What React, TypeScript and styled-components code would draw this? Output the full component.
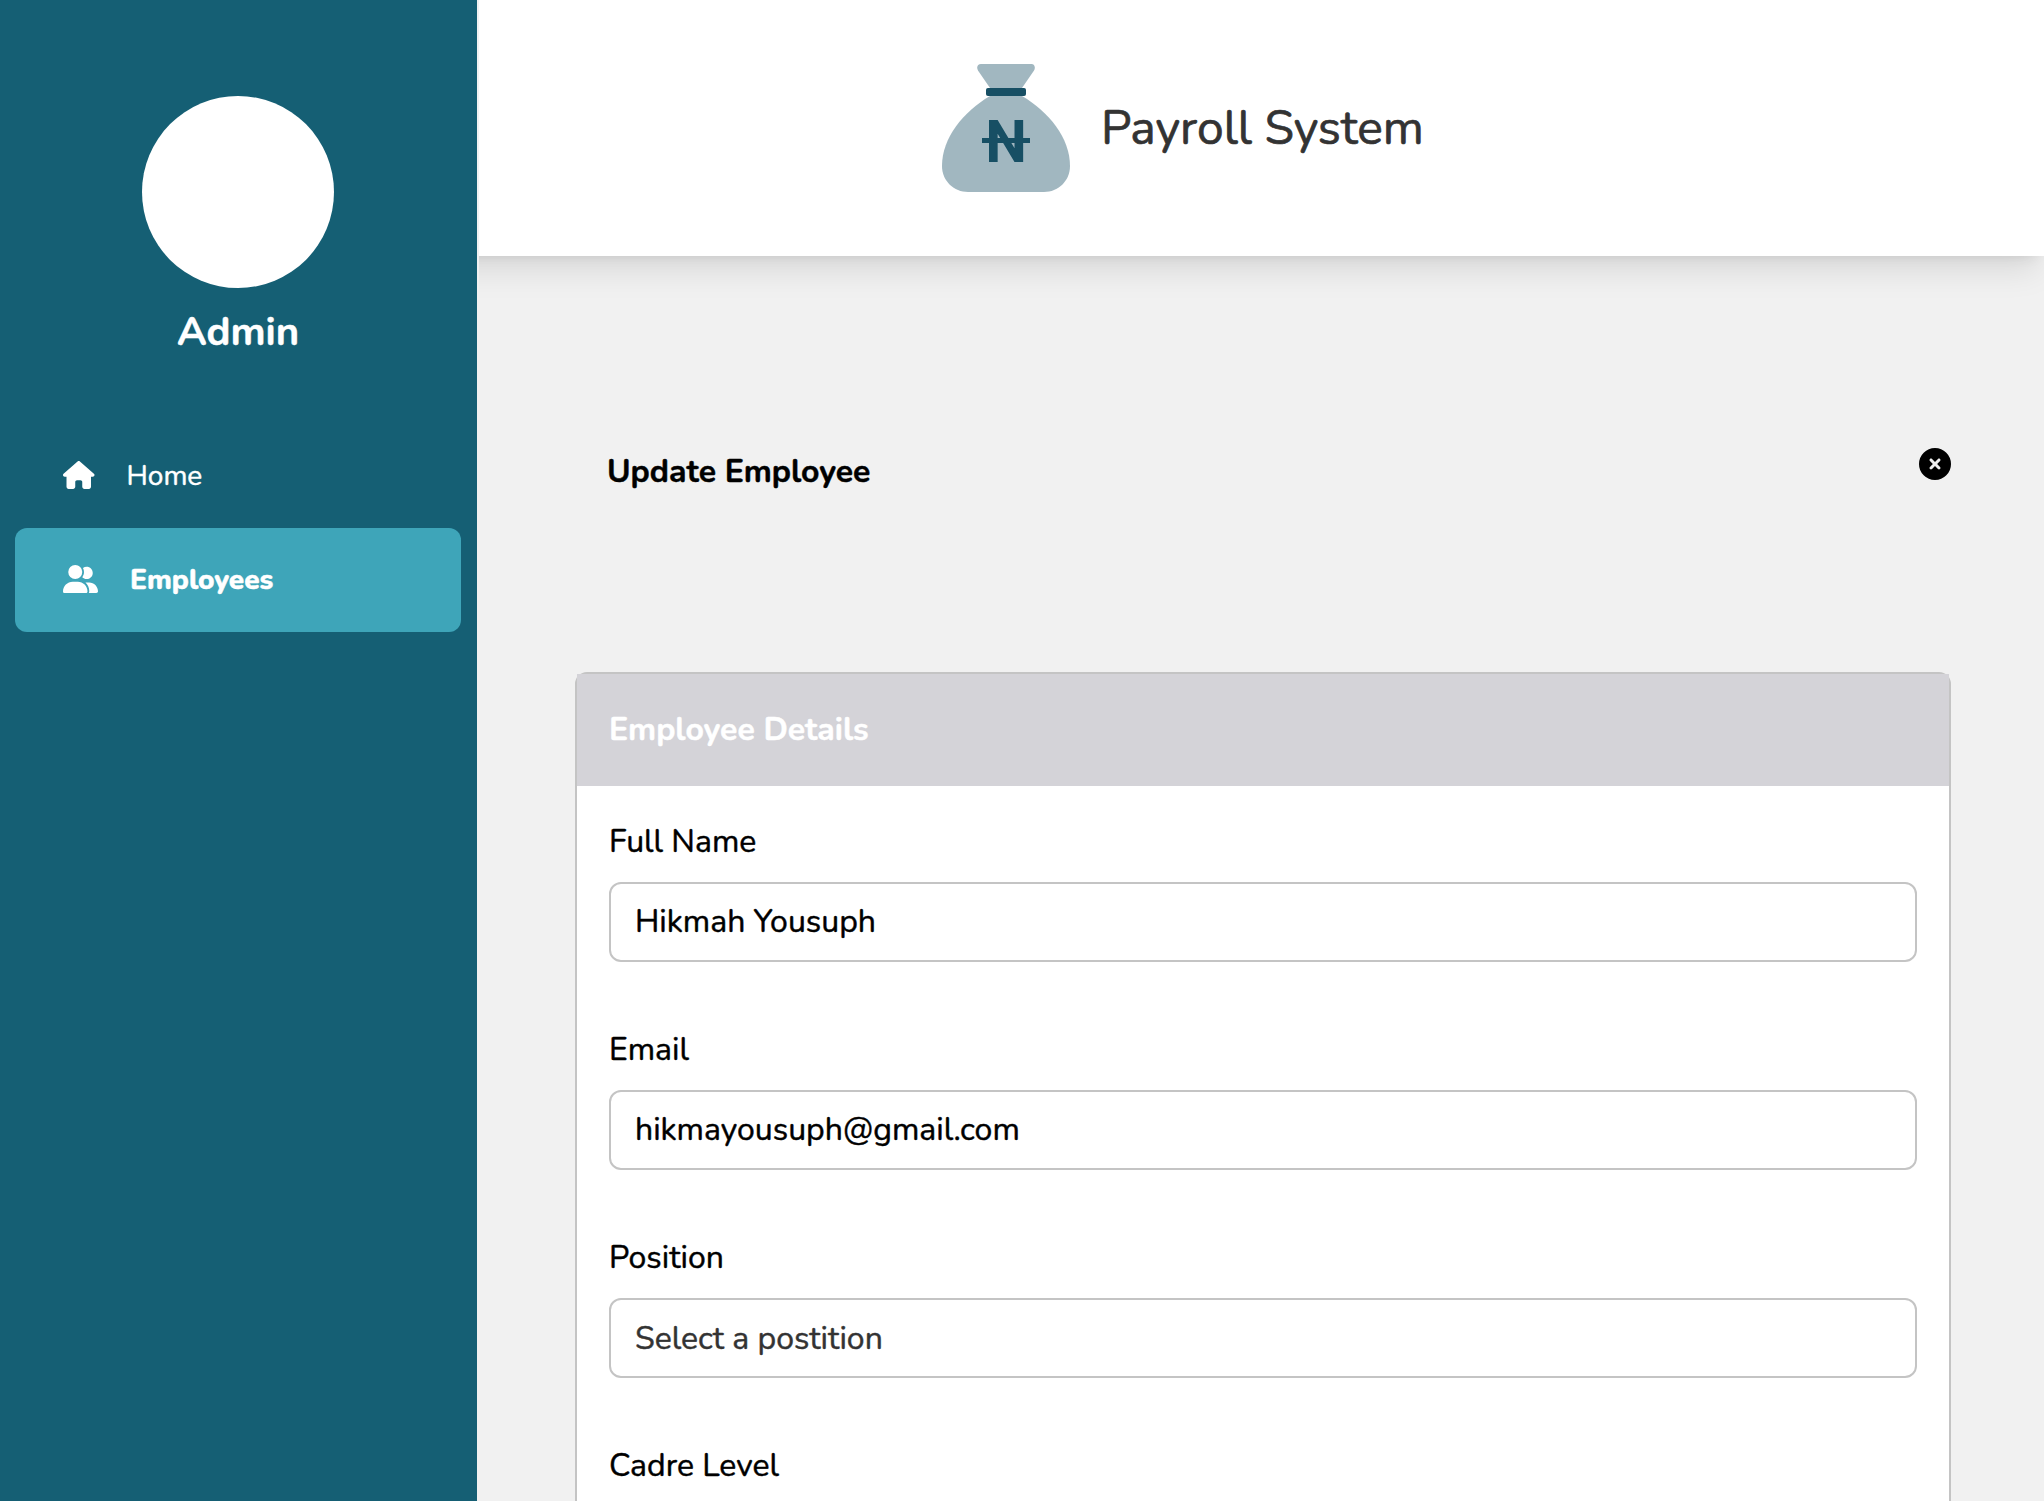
import React from "react";
import styled, { createGlobalStyle } from "styled-components";
import { FaCircleXmark, FaHouse, FaUserGroup } from "react-icons/fa6";

const GlobalStyle = createGlobalStyle`
  *, *::before, *::after { box-sizing: border-box; }
  body {
    margin: 0;
    background: #f1f1f1;
    color: #000;
    font-family: Nunito, Lato, "Open Sans", sans-serif;
    font-weight: 400;
    -webkit-text-stroke-width: 0.45px;
  }
  h1, h2, p { margin: 0; }
`;

const Page = styled.div`
  display: flex;
  gap: 2px;
  height: 100vh;
  overflow: hidden;
`;

const Sidebar = styled.aside`
  display: flex;
  flex-direction: column;
  align-items: center;
  flex: none;
  width: 477px;
  padding: 96px 16px 0 15px;
  background: #155f74;
  color: #fff;
`;

const Avatar = styled.div`
  width: 192px;
  height: 192px;
  border-radius: 50%;
  background: #fff;
`;

const UserName = styled.p`
  margin-top: 20px;
  font-size: 40px;
  line-height: 48px;
  font-weight: 700;
`;

const Nav = styled.nav`
  align-self: stretch;
  margin-top: 68px;
`;

const NavItem = styled.a<{ $active?: boolean; $iconWidth: number }>`
  display: flex;
  align-items: center;
  gap: 32px;
  height: 104px;
  padding: 0 48px;
  border-radius: 12px;
  background: ${(p) => (p.$active ? "#3ea5b9" : "transparent")};
  font-size: 28px;
  line-height: 40px;
  font-weight: ${(p) => (p.$active ? 800 : 400)};

  svg {
    flex: none;
    width: ${(p) => p.$iconWidth}px;
    height: 28px;
    margin-bottom: 3px;
  }
`;

const Main = styled.main`
  flex: 1;
  min-width: 0;
  overflow: hidden;
`;

/* The bar runs on beneath the sidebar so its shadow starts at full strength. */
const TopBar = styled.header`
  display: flex;
  align-items: center;
  height: 256px;
  margin-left: -60px;
  padding-left: 523px;
  background: #fff;
  box-shadow: 0 20px 30px -6px rgba(0, 0, 0, 0.1), 0 8px 12px -8px rgba(0, 0, 0, 0.1);
`;

const Brand = styled.h1`
  margin-left: 31px;
  color: #333;
  font-size: 48px;
  line-height: 64px;
  font-weight: 400;
  -webkit-text-stroke-width: 0.7px;
`;

const Content = styled.section`
  padding: 192px 93px 0 96px;
`;

const TitleRow = styled.div`
  display: flex;
  justify-content: space-between;
  align-items: flex-start;
  height: 48px;
  margin-bottom: 176px;
  padding-left: 32px;
`;

const Title = styled.h2`
  font-size: 32px;
  line-height: 48px;
  font-weight: 700;
`;

const Card = styled.div`
  border: 2px solid #c4c4c4;
  border-radius: 12px;
  background: #fff;
`;

const CardHeader = styled.div`
  display: flex;
  align-items: center;
  height: 112px;
  padding: 0 32px;
  background: #d4d3d8;
  color: #fff;
  font-size: 32px;
  line-height: 48px;
  font-weight: 700;
`;

const Fields = styled.div`
  display: flex;
  flex-direction: column;
  gap: 64px;
  padding: 32px 32px 64px;
`;

const Field = styled.div`
  display: flex;
  flex-direction: column;
  gap: 16px;
`;

const Label = styled.span`
  font-size: 32px;
  line-height: 48px;
`;

const Control = styled.div<{ $select?: boolean }>`
  display: flex;
  align-items: center;
  height: 80px;
  padding: ${(p) => (p.$select ? 2 : 0)}px 24px 0;
  border: 2px solid #c4c4c4;
  border-radius: 12px;
  background: #fff;
  color: ${(p) => (p.$select ? "#333" : "#000")};
  font-size: 32px;
  line-height: 48px;
`;

const LogoMark = styled.svg`
  flex: none;
  width: 128px;
  height: 128px;
  -webkit-text-stroke-width: 0;
`;

const Logo = () => (
  <LogoMark viewBox="0 0 128 128" fill="none">
    <path d="M39 0H89.500C92.500 0 93.800 3.500 92 6.500L80 24H48L36 6.500C34.200 3.500 35.500 0 39 0Z" fill="#a1b7c0" />
    <path d="M48 32H80C107 48 128 74 128 102C128 117 116 128 102 128H26C12 128 0 117 0 102C0 74 21 48 48 32Z" fill="#a1b7c0" />
    <rect x="44" y="24" width="40" height="8" rx="2" fill="#174f64" />
    <text x="64" y="98" textAnchor="middle" fontFamily="Roboto, sans-serif" fontWeight="700" fontSize="59" fill="#174f64">N</text>
    <rect x="40" y="74" width="48" height="5" fill="#174f64" />
  </LogoMark>
);

const fields = [
  { label: "Full Name", value: "Hikmah Yousuph" },
  { label: "Email", value: "hikmayousuph@gmail.com" },
  { label: "Position", value: "Select a postition", select: true },
  { label: "Cadre Level", value: "", select: true },
];

export default function App() {
  return (
    <>
      <GlobalStyle />
      <Page>
        <Sidebar>
          <Avatar />
          <UserName>Admin</UserName>
          <Nav>
            <NavItem $iconWidth={31.5}><FaHouse />Home</NavItem>
            <NavItem $active $iconWidth={35}><FaUserGroup />Employees</NavItem>
          </Nav>
        </Sidebar>
        <Main>
          <TopBar>
            <Logo />
            <Brand>Payroll System</Brand>
          </TopBar>
          <Content>
            <TitleRow>
              <Title>Update Employee</Title>
              <FaCircleXmark size={32} />
            </TitleRow>
            <Card>
              <CardHeader>Employee Details</CardHeader>
              <Fields>
                {fields.map((f) => (
                  <Field key={f.label}>
                    <Label>{f.label}</Label>
                    <Control $select={f.select}>{f.value}</Control>
                  </Field>
                ))}
              </Fields>
            </Card>
          </Content>
        </Main>
      </Page>
    </>
  );
}
